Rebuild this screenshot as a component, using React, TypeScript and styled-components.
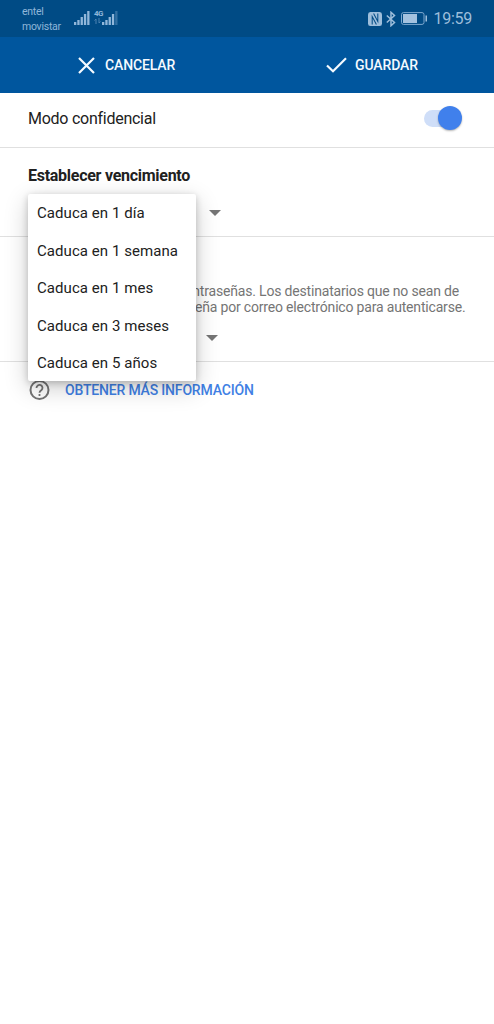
import React from 'react';
import styled, { createGlobalStyle } from 'styled-components';

const GlobalStyle = createGlobalStyle`
  * { box-sizing: border-box; }
  body { margin: 0; background: #fff; font-family: Roboto, "Liberation Sans", sans-serif; color: #212121; }
  svg { display: block; flex: none; }
`;

const Screen = styled.div`
  width: 494px;
  height: 1024px;
  background: #fff;
  overflow: hidden;
`;

const StatusBar = styled.header`
  height: 37px;
  background: #004b85;
  color: #8fb6d9;
  display: flex;
  align-items: center;
  justify-content: space-between;
  padding: 0 22px;
`;

const StatusGroup = styled.div<{ $gap: number }>`
  display: flex;
  align-items: center;
  gap: ${(p) => p.$gap}px;
`;

const Carriers = styled.div`
  font-size: 10.5px;
  line-height: 15px;
  letter-spacing: -0.25px;
  padding-top: 1px;
  width: 52px;
`;

const Clock = styled.span`
  font-size: 16px;
  line-height: 20px;
  letter-spacing: -0.25px;
  padding-left: 1px;
  color: #9dbedb;
`;

const Toolbar = styled.nav`
  height: 56px;
  background: #00569e;
  display: flex;
`;

const ToolbarButton = styled.button<{ $inset: number; $gap: number }>`
  flex: 1;
  border: 0;
  background: none;
  color: #f4faff;
  font: 500 14px/20px Roboto, "Liberation Sans", sans-serif;
  letter-spacing: -0.14px;
  display: flex;
  align-items: center;
  gap: ${(p) => p.$gap}px;
  padding: 0 0 0 ${(p) => p.$inset}px;
`;

const Section = styled.section<{ $height: number }>`
  height: ${(p) => p.$height}px;
  border-bottom: 1px solid #e0e0e0;
  padding: 0 28px;
`;

const ModeRow = styled(Section)`
  display: flex;
  align-items: center;
  justify-content: space-between;
  padding: 0 32px 4px 28px;
  font-size: 16px;
  letter-spacing: -0.26px;
`;

const Switch = styled.div`
  width: 38px;
  height: 24px;
  display: flex;
  align-items: center;
`;

const Track = styled.div`
  width: 32px;
  height: 17px;
  border-radius: 9px;
  background: #cfdef8;
`;

const Thumb = styled.div`
  width: 24px;
  height: 24px;
  margin-left: -18px;
  flex: none;
  border-radius: 50%;
  background: #4080ec;
  box-shadow: 0 1px 2px rgba(0, 0, 0, 0.3);
`;

const Heading = styled.h2`
  margin: 0;
  padding-top: 18px;
  font-size: 16px;
  line-height: 20px;
  font-weight: 700;
  letter-spacing: -0.27px;
`;

const Picker = styled.div<{ $arrow: number; $top: number }>`
  position: relative;
  margin-top: ${(p) => p.$top}px;
  padding-left: ${(p) => p.$arrow}px;
`;

const Menu = styled.ul`
  position: absolute;
  z-index: 2;
  left: 0;
  top: -16px;
  width: 168px;
  height: 187px;
  margin: 0;
  padding: 0;
  list-style: none;
  background: #fff;
  border-radius: 2px;
  box-shadow: 0 7px 24px rgba(0, 0, 0, 0.2), 0 2px 7px rgba(0, 0, 0, 0.2);
`;

const MenuItem = styled.li`
  height: 37.5px;
  padding: 1px 9px 0;
  font-size: 15px;
  line-height: 37.5px;
  letter-spacing: 0.06px;
  white-space: nowrap;
`;

const Description = styled.p`
  margin: 0;
  padding-top: 46px;
  font-size: 14px;
  line-height: 16px;
  color: #757575;
  text-align: right;
  white-space: nowrap;
`;

const Line = styled.span<{ $end: number; $spacing: number }>`
  display: block;
  margin-right: ${(p) => p.$end}px;
  letter-spacing: ${(p) => p.$spacing}px;
`;

const InfoLink = styled.div`
  display: flex;
  align-items: center;
  gap: 14px;
  padding: 16px 28px;
  color: #4080e4;
  font-size: 14px;
  line-height: 24px;
  font-weight: 500;
  letter-spacing: -0.18px;
`;

const Signal = ({ dim = false }: { dim?: boolean }) => (
  <svg width="16" height="14" viewBox="0 0 16 14" fill="#91b7da">
    <rect x="0" y="11" width="2.300" height="3" />
    <rect x="3.3" y="9" width="2.300" height="5" />
    <rect x="6.6" y="6" width="2.300" height="8" />
    <rect x="9.9" y="3" width="2.300" height="11" />
    <rect x="13.2" y="0" width="2.300" height="14" opacity={dim ? 0.35 : 1} />
  </svg>
);

const Network = styled.div`
  display: flex;
  align-items: flex-end;
  padding-bottom: 2px;
`;

const NetworkType = styled.div`
  width: 9px;
  height: 15px;
  margin: 0 -1px 0 4px;
  font-size: 8px;
  line-height: 8px;
  letter-spacing: -0.6px;
  font-weight: 700;
`;

const Transfer = () => (
  <svg width="7" height="6" viewBox="0 0 7 6" fill="none" stroke="#4c83b1" strokeWidth="1">
    <path d="M2 6V1L.5 2.5M5 0v5l1.5-1.5" />
  </svg>
);

const Arrow = () => (
  <svg width="12" height="6" viewBox="0 0 12 6"><path d="M0 0h12L6 6z" fill="#757575" /></svg>
);

const options = ['Caduca en 1 día', 'Caduca en 1 semana', 'Caduca en 1 mes', 'Caduca en 3 meses', 'Caduca en 5 años'];

export default function App() {
  return (
    <Screen>
      <GlobalStyle />
      <StatusBar>
        <StatusGroup $gap={0}>
          <Carriers>entel<br />movistar</Carriers>
          <Network>
            <Signal />
            <NetworkType>4G<Transfer /></NetworkType>
            <Signal dim />
          </Network>
        </StatusGroup>
        <StatusGroup $gap={4}>
          <svg width="14" height="14" viewBox="0 0 15 14" preserveAspectRatio="none">
            <rect width="15" height="14" rx="2.500" fill="#9dbedb" />
            <path d="M4.500 12.500V4.500L9 12.500M10.500 1.500V9.500L6 1.500" fill="none" stroke="#004b85" strokeWidth="1.100" />
          </svg>
          <svg width="10" height="16" viewBox="0 0 10 16" fill="none" stroke="#9dbedb" strokeWidth="1.5">
            <path d="M.8 4.500 8.500 11.500 5 14.700V1.300L8.500 4.500.8 11.500" />
          </svg>
          <svg width="28" height="13" viewBox="0 0 28 13">
            <rect x="1.500" y=".6" width="22.500" height="11.800" rx="2" fill="none" stroke="#7da8cf" />
            <rect x="3" y="2" width="14" height="9" fill="#a3c2df" />
            <rect x="25.500" y="3.500" width="1.500" height="6" fill="#9dbedb" />
          </svg>
          <Clock>19:59</Clock>
        </StatusGroup>
      </StatusBar>
      <Toolbar>
        <ToolbarButton $inset={78} $gap={10}>
          <svg width="17" height="17" viewBox="0 0 17 17" fill="none" stroke="#f4faff" strokeWidth="2.200">
            <path d="M1 1 16 16M16 1 1 16" />
          </svg>
          CANCELAR
        </ToolbarButton>
        <ToolbarButton $inset={79} $gap={8.6}>
          <svg width="21" height="16" viewBox="0 0 21 16" fill="none" stroke="#f4faff" strokeWidth="2.200">
            <path d="M1 8.500 7 14.300 20 1.200" />
          </svg>
          GUARDAR
        </ToolbarButton>
      </Toolbar>
      <ModeRow $height={55}>
        Modo confidencial
        <Switch><Track /><Thumb /></Switch>
      </ModeRow>
      <Section $height={89}>
        <Heading>Establecer vencimiento</Heading>
        <Picker $top={24} $arrow={181}>
          <Arrow />
          <Menu>
            {options.map((o) => <MenuItem key={o}>{o}</MenuItem>)}
          </Menu>
        </Picker>
      </Section>
      <Section $height={125}>
        <Description>
          <Line $end={7} $spacing={-0.18}>contraseñas. Los destinatarios que no sean de</Line>
          <Line $end={0.5} $spacing={-0.18}>contraseña por correo electrónico para autenticarse.</Line>
        </Description>
        <Picker $top={20} $arrow={178}><Arrow /></Picker>
      </Section>
      <InfoLink>
        <svg width="23" height="24" viewBox="0 0 23 24" fill="none" stroke="#757575" strokeWidth="2">
          <circle cx="11.500" cy="12" r="9" />
          <path d="M8.500 10a3 3 0 1 1 4.900 2.200c-1.100.8-1.900 1.300-1.900 2.600M11.500 16v2" strokeWidth="1.800" />
        </svg>
        OBTENER MÁS INFORMACIÓN
      </InfoLink>
    </Screen>
  );
}
